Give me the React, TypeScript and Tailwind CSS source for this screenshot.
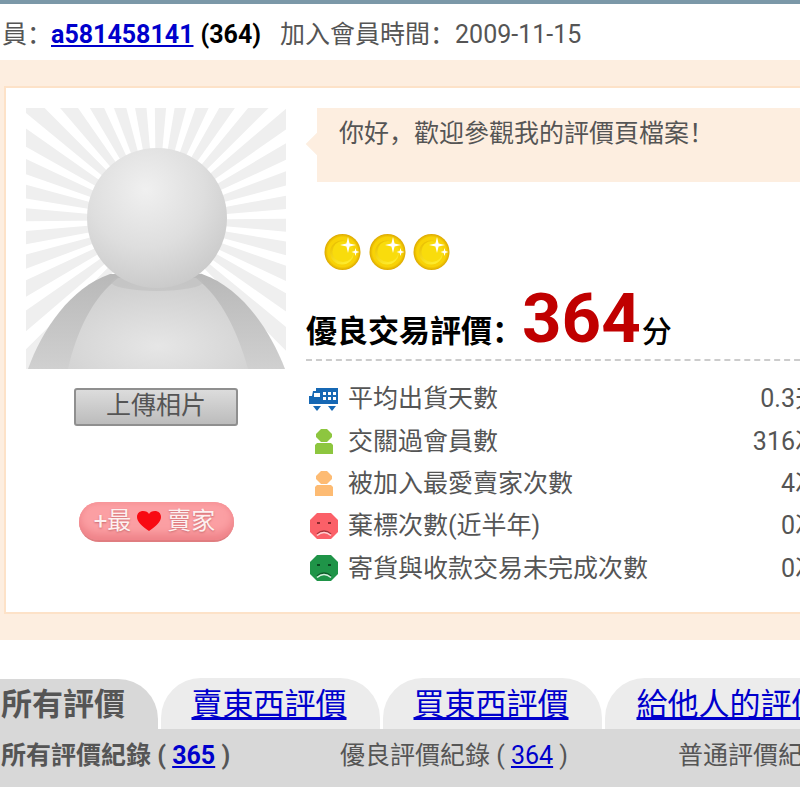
import type { ReactNode } from 'react'

/* ---------- drawings ---------- */

function Avatar() {
  const rays = Array.from({ length: 36 }, (_, i) => {
    const a = (i / 36) * Math.PI * 2 + 0.04
    const w = 0.05
    const r = 300
    const cx = 130
    const cy = 112
    return `${cx},${cy} ${cx + r * Math.cos(a - w)},${cy + r * Math.sin(a - w)} ${cx + r * Math.cos(a + w)},${cy + r * Math.sin(a + w)}`
  })
  return (
    <svg width="260" height="261" viewBox="0 0 260 261" className="block shrink-0">
      <defs>
        <radialGradient id="head" cx="0.42" cy="0.3" r="0.75">
          <stop offset="0" stopColor="#f0f0f0" />
          <stop offset="0.55" stopColor="#dedede" />
          <stop offset="1" stopColor="#c8c8c8" />
        </radialGradient>
        <radialGradient id="belly" cx="0.5" cy="0.75" r="0.7">
          <stop offset="0" stopColor="#e6e6e6" />
          <stop offset="1" stopColor="#cfcfcf" />
        </radialGradient>
        <linearGradient id="shoulder" x1="0" y1="0" x2="0" y2="1">
          <stop offset="0" stopColor="#b8b8b8" />
          <stop offset="1" stopColor="#d0d0d0" />
        </linearGradient>
      </defs>
      <rect width="260" height="261" fill="#ffffff" />
      {rays.map((p, i) => (
        <polygon key={i} points={p} fill="#efefef" />
      ))}
      <path d="M2 261 C16 222 44 180 84 166 L176 166 C216 180 244 222 259 261 Z" fill="url(#shoulder)" />
      <path d="M42 261 C50 225 66 190 92 170 L170 170 C196 190 212 225 222 261 Z" fill="url(#belly)" />
      <ellipse cx="131" cy="174" rx="46" ry="9" fill="#bdbdbd" opacity="0.55" />
      <circle cx="131" cy="110" r="70" fill="url(#head)" />
    </svg>
  )
}

function Coin() {
  return (
    <svg width="37" height="38" viewBox="0 0 37 38" className="block">
      <defs>
        <radialGradient id="coinEdge" cx="0.5" cy="0.5" r="0.5">
          <stop offset="0" stopColor="#f8d808" />
          <stop offset="0.82" stopColor="#f8d206" />
          <stop offset="1" stopColor="#dca800" />
        </radialGradient>
        <linearGradient id="coinFace" x1="0.2" y1="0" x2="0.7" y2="1">
          <stop offset="0" stopColor="#e8bd00" />
          <stop offset="1" stopColor="#ffee30" />
        </linearGradient>
      </defs>
      <circle cx="18.5" cy="19" r="18" fill="url(#coinEdge)" />
      <circle cx="18" cy="19.5" r="12" fill="url(#coinFace)" />
      <circle cx="19" cy="18.5" r="10.5" fill="#f9dc0c" />
      <path d="M24 4 L25.6 10.4 L32 12 L25.6 13.6 L24 20 L22.4 13.6 L16 12 L22.4 10.4 Z" fill="#ffffff" />
      <path d="M31.5 15 L32.4 18.1 L35.5 19 L32.4 19.9 L31.5 23 L30.6 19.9 L27.5 19 L30.6 18.1 Z" fill="#ffffff" />
    </svg>
  )
}

function TruckIcon() {
  return (
    <svg width="30" height="24" viewBox="0 0 30 24" className="block">
      <path d="M0 17 L0 9 L3 9 L4 4 L7 4 L7 1 L29 1 L29 17 Z" fill="#1668b4" />
      <rect x="5" y="6" width="6" height="4" fill="#ffffff" />
      <rect x="14" y="5" width="3" height="3" fill="#ffffff" />
      <rect x="19" y="5" width="3" height="3" fill="#ffffff" />
      <rect x="24" y="5" width="3" height="3" fill="#ffffff" />
      <rect x="14" y="10" width="3" height="3" fill="#ffffff" />
      <rect x="19" y="10" width="3" height="3" fill="#ffffff" />
      <rect x="24" y="10" width="3" height="3" fill="#ffffff" />
      <path d="M4 19 L12 19 L8 24 Z" fill="#1668b4" />
      <path d="M19 19 L27 19 L23 24 Z" fill="#1668b4" />
    </svg>
  )
}

function PersonIcon({ color }: { color: string }) {
  return (
    <svg width="30" height="25" viewBox="0 0 30 25" className="block">
      <path d="M12 0 L18 0 L23 5 L23 8 L18 13 L12 13 L7 8 L7 5 Z" fill={color} />
      <path d="M8 14 L22 14 L24 16 L24 25 L6 25 L6 16 Z" fill={color} />
    </svg>
  )
}

function FaceIcon({ color, eye, mouth }: { color: string; eye: string; mouth: string }) {
  return (
    <svg width="30" height="26" viewBox="0 0 30 26" className="block">
      <path d="M8 0 L22 0 L29 7 L29 19 L22 26 L8 26 L1 19 L1 7 Z" fill={color} />
      <rect x="8" y="9" width="3" height="2" fill={eye} />
      <rect x="19" y="9" width="3" height="2" fill={eye} />
      <path d="M8 21 Q15 15 22 21" fill="none" stroke={eye} strokeWidth="1.5" opacity="0.8" />
      <path d="M8 22.5 Q15 16.5 22 22.5" fill="none" stroke={mouth} strokeWidth="1.6" />
    </svg>
  )
}

function Heart() {
  return (
    <svg width="24" height="20" viewBox="0 0 24 20" className="block mx-[6px]">
      <path d="M12 20 C5 15 0 11 0 6 C0 2 3 0 6 0 C9 0 11 1 12 3 C13 1 15 0 18 0 C21 0 24 2 24 6 C24 11 19 15 12 20 Z" fill="#f80a12" />
    </svg>
  )
}

/* ---------- rows ---------- */

function StatRow({ icon, label, value }: { icon: ReactNode; label: string; value: string }) {
  return (
    <div className="flex items-center h-[42.3px]">
      <div className="w-[36px] shrink-0 pl-[3px]">{icon}</div>
      <span className="pl-[6px]">{label}</span>
      <span className="ml-auto">{value}</span>
    </div>
  )
}

function Tab({ width, children }: { width: string; children: string }) {
  return (
    <a href="#" className={`${width} shrink-0 h-[51px] bg-[#ececec] rounded-t-[40px] flex items-center justify-center pt-[3px] pr-[3px] text-[31px] text-[#0000cc] underline`}>
      {children}
    </a>
  )
}

export default function App() {
  return (
    <div className="w-[800px] h-[800px] overflow-hidden bg-white text-[25px] text-[#555555] font-['Roboto','Noto_Sans_CJK_SC',sans-serif]">
      <div className="h-[4px] bg-[#7b98a8]" />

      <div className="h-[56px] flex items-center whitespace-nowrap pl-[2px] pt-[5px]">
        <span>員：</span>
        <a href="#" className="font-bold text-[#0000cc] underline -ml-[1px]">a581458141</a>
        <b className="text-black ml-[7px]">(364)</b>
        <span className="ml-[19px]">加入會員時間：2009-11-15</span>
      </div>

      <div className="h-[580px] bg-[#fdeee0] pt-[26px]">
        <div className="ml-[4px] w-[900px] h-[528px] bg-white border-2 border-[#fde2c8] pl-[20px] pt-[20px] flex">
          <div className="w-[260px] shrink-0 flex flex-col items-center">
            <Avatar />
            <button className="mt-[19px] w-[164px] h-[38px] rounded-[3px] border-2 border-[#8f8f8f] bg-gradient-to-b from-[#dcdcdc] to-[#bcbcbc] text-[#555555] leading-none pb-[3px]">
              上傳相片
            </button>
            <button className="mt-[76px] w-[155px] h-[40px] rounded-[20px] bg-[#fb9fa3] border-b-2 border-[#e07d80] shadow-[inset_0_-6px_8px_#ee8288,inset_0_3px_3px_#f8989c] flex items-center justify-center pr-[3px] text-[#fdf0f0] text-[24px] leading-none [text-shadow:0_1px_2px_#c96a6e]">
              +最
              <Heart />
              賣家
            </button>
          </div>

          <div className="ml-[20px] w-[514px] shrink-0">
            <div className="relative ml-[11px] w-[600px] h-[74px] bg-[#fdeee0] pl-[22px] pt-[7px]">
              <div className="absolute left-[-8px] top-[28px] w-[16px] h-[16px] rotate-45 bg-[#fdeee0]" />
              你好，歡迎參觀我的評價頁檔案！
            </div>

            <div className="flex gap-[7.5px] pl-[18px] mt-[51px]">
              <Coin />
              <Coin />
              <Coin />
            </div>

            <div className="h-[90px] flex items-baseline text-black font-bold whitespace-nowrap border-b-2 border-dashed border-[#cccccc] leading-[96px]">
              <span className="text-[31px]">優良交易評價</span>
              <span className="text-[31px] w-[30px]">：</span>
              <span className="text-[69px] text-[#c00000]">364</span>
              <span className="text-[30px] font-medium ml-[1px]">分</span>
            </div>

            <div className="pt-[17px]">
              <StatRow icon={<TruckIcon />} label="平均出貨天數" value="0.3天" />
              <StatRow icon={<PersonIcon color="#8dc63f" />} label="交關過會員數" value="316次" />
              <StatRow icon={<PersonIcon color="#fdbb73" />} label="被加入最愛賣家次數" value="4次" />
              <StatRow icon={<FaceIcon color="#fb6068" eye="#8c2b2f" mouth="#ffd0d2" />} label="棄標次數(近半年)" value="0次" />
              <StatRow icon={<FaceIcon color="#1f9448" eye="#0c4a22" mouth="#d6f0de" />} label="寄貨與收款交易未完成次數" value="0次" />
            </div>
          </div>
        </div>
      </div>

      <div className="mt-[38px] flex w-[900px] gap-[3px] h-[51px] items-end">
        <div className="w-[158px] shrink-0 h-[50px] bg-[#d8d8d8] rounded-tr-[40px] flex items-center pl-[1px] pt-[3px] text-[31px] font-bold">
          所有評價
        </div>
        <Tab width="w-[219px]">賣東西評價</Tab>
        <Tab width="w-[219px]">買東西評價</Tab>
        <Tab width="w-[252px]">給他人的評價</Tab>
      </div>

      <div className="h-[58px] w-full bg-[#d8d8d8] flex whitespace-nowrap pl-[1px] pt-[8px]">
        <div className="w-[339px] shrink-0 font-bold">
          所有評價紀錄 ( <a href="#" className="text-[#0000cc] underline">365</a> )
        </div>
        <div className="w-[338px] shrink-0">
          優良評價紀錄 ( <a href="#" className="text-[#0000cc] underline">364</a> )
        </div>
        <div>普通評價紀錄</div>
      </div>
    </div>
  )
}
